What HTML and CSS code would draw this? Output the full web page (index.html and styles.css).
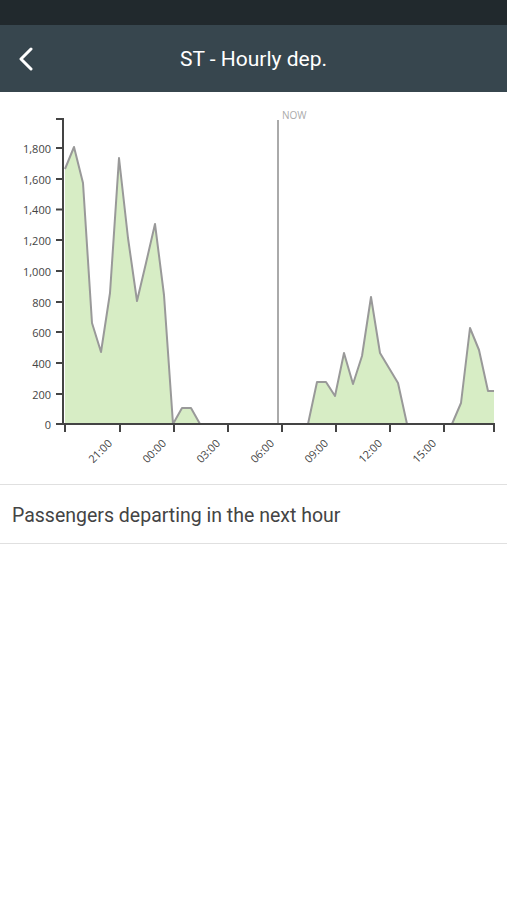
FILE: index.html
```html
<!DOCTYPE html>
<html lang="en">
<head>
    <meta charset="UTF-8">
    <meta name="viewport" content="width=device-width, initial-scale=1.0">
    <title>ST - Hourly dep.</title>
    <link rel="stylesheet" href="styles.css">
</head>

<body>
    <div class="status-bar"></div>
    <header class="app-bar">
        <button class="back-btn" aria-label="Back">
            <svg width="16" height="24" viewBox="0 0 16 24">
                <path d="M13 2 L3 12 L13 22" fill="none" stroke="#fff" stroke-width="3" stroke-linecap="round" stroke-linejoin="round"/>
            </svg>
        </button>
        <h1>ST - Hourly dep.</h1>
    </header>

    <!-- chart uses page coordinates (y starts at 92) -->
    <svg class="chart" width="507" height="392" viewBox="0 92 507 392">
        <path class="area" d="M65,424 L65,169 L74,147 L83,183 L92,323 L101,352 L110,293 L119,158 L128,238 L137,301 L146,263 L155,224 L164,295 L173,424 L182,408 L191,408 L200,424 L308,424 L317,382 L326,382 L335,396 L344,353 L353,384 L362,356 L371,297 L380,353 L389,368 L398,383 L407,424 L452,424 L461,403 L470,328 L479,350 L488,391 L494,391 L494,424 Z"/>
        <path class="line" d="M65,169 L74,147 L83,183 L92,323 L101,352 L110,293 L119,158 L128,238 L137,301 L146,263 L155,224 L164,295 L173,424 L182,408 L191,408 L200,424 L308,424 L317,382 L326,382 L335,396 L344,353 L353,384 L362,356 L371,297 L380,353 L389,368 L398,383 L407,424 L452,424 L461,403 L470,328 L479,350 L488,391 L494,391"/>

        <line class="now-line" x1="278" y1="120" x2="278" y2="424"/>
        <text class="now-label" x="282" y="119">NOW</text>

        <g class="axis">
            <path d="M56,119 H63 V424 H494 V432"/>
            <line x1="56" y1="148" x2="63" y2="148"/>
            <line x1="56" y1="179" x2="63" y2="179"/>
            <line x1="56" y1="209.5" x2="63" y2="209.5"/>
            <line x1="56" y1="240" x2="63" y2="240"/>
            <line x1="56" y1="271" x2="63" y2="271"/>
            <line x1="56" y1="302" x2="63" y2="302"/>
            <line x1="56" y1="332" x2="63" y2="332"/>
            <line x1="56" y1="363" x2="63" y2="363"/>
            <line x1="56" y1="394" x2="63" y2="394"/>
            <line x1="56" y1="424" x2="63" y2="424"/>

            <line x1="65" y1="424" x2="65" y2="432"/>
            <line x1="120" y1="424" x2="120" y2="432"/>
            <line x1="174" y1="424" x2="174" y2="432"/>
            <line x1="228" y1="424" x2="228" y2="432"/>
            <line x1="282" y1="424" x2="282" y2="432"/>
            <line x1="336" y1="424" x2="336" y2="432"/>
            <line x1="390" y1="424" x2="390" y2="432"/>
            <line x1="444" y1="424" x2="444" y2="432"/>
        </g>

        <g class="y-labels">
            <text x="51" y="148">1,800</text>
            <text x="51" y="179">1,600</text>
            <text x="51" y="209.5">1,400</text>
            <text x="51" y="240">1,200</text>
            <text x="51" y="271">1,000</text>
            <text x="51" y="302">800</text>
            <text x="51" y="332">600</text>
            <text x="51" y="363">400</text>
            <text x="51" y="394">200</text>
            <text x="51" y="424">0</text>
        </g>

        <g class="x-labels">
            <text transform="translate(113,444) rotate(-45)">21:00</text>
            <text transform="translate(167,444) rotate(-45)">00:00</text>
            <text transform="translate(221,444) rotate(-45)">03:00</text>
            <text transform="translate(275,444) rotate(-45)">06:00</text>
            <text transform="translate(329,444) rotate(-45)">09:00</text>
            <text transform="translate(383,444) rotate(-45)">12:00</text>
            <text transform="translate(437,444) rotate(-45)">15:00</text>
        </g>
    </svg>

    <ul class="list">
        <li>Passengers departing in the next hour</li>
    </ul>
</body>
</html>
```

FILE: styles.css
```css
body {
    font-family: Roboto, "Noto Sans", sans-serif;
    background-color: #fff;
    margin: 0;
    padding: 0;
}

.status-bar {
    height: 25px;
    background-color: #21292d;
}

.app-bar {
    position: relative;
    height: 67px;
    background-color: #37464e;
    display: flex;
    align-items: center;
    justify-content: center;
}

.app-bar h1 {
    margin: 0;
    color: #fff;
    font-size: 21px;
    font-weight: 400;
}

.back-btn {
    position: absolute;
    left: 14px;
    top: 22px;
    background: none;
    border: none;
    padding: 0;
    width: 24px;
    height: 26px;
}

.chart {
    display: block;
}

.area {
    fill: #d7edc5;
    stroke: none;
}

.line {
    fill: none;
    stroke: #999;
    stroke-width: 2;
    stroke-linejoin: round;
}

.now-line {
    stroke: #aaa;
    stroke-width: 2;
}

.now-label {
    font-family: "Open Sans", sans-serif;
    font-size: 10px;
    fill: #aaa;
}

.axis path,
.axis line {
    fill: none;
    stroke: #444;
    stroke-width: 2;
}

.y-labels text {
    font-family: "Open Sans", sans-serif;
    font-size: 11px;
    fill: #444;
    text-anchor: end;
    dominant-baseline: central;
}

.x-labels text {
    font-family: "Open Sans", sans-serif;
    font-size: 11px;
    fill: #444;
    text-anchor: end;
}

.list {
    list-style-type: none;
    margin: 0;
    padding: 0;
}

.list li {
    border-top: 1px solid #e0e0e0;
    border-bottom: 1px solid #e0e0e0;
    padding: 4px 12px 0;
    line-height: 54px;
    font-size: 19.5px;
    color: #444;
}
```
